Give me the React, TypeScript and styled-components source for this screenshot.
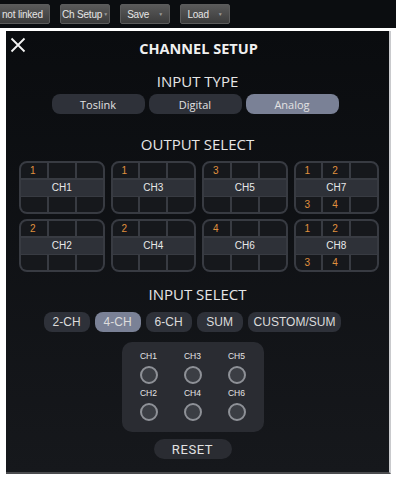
import React from 'react';
import styled, { createGlobalStyle } from 'styled-components';

const GlobalStyle = createGlobalStyle`
  html, body {
    margin: 0;
    padding: 0;
    background: #ffffff;
  }
  * {
    box-sizing: border-box;
  }
`;

const Page = styled.div`
  width: 396px;
  height: 482px;
  display: flex;
  flex-direction: column;
  background: #ffffff;
  overflow: hidden;
`;

const TopBar = styled.div`
  height: 28px;
  display: flex;
  align-items: center;
  gap: 10px;
  background: #0b0d10;
`;

const BarButton = styled.div<{ $first?: boolean }>`
  width: ${(p) => (p.$first ? '52px' : '50px')};
  height: 20px;
  margin-left: ${(p) => (p.$first ? '-2px' : '0')};
  padding-left: ${(p) => (p.$first ? '3px' : '0')};
  display: flex;
  align-items: center;
  justify-content: ${(p) => (p.$first ? 'flex-start' : 'center')};
  white-space: nowrap;
  border-radius: 2px;
  border: 1px solid #5c5c5c;
  background: linear-gradient(#5a5a5a, #3c3c3c);
  color: #e6e6e6;
  font-family: 'Liberation Sans', Arial, sans-serif;
  font-size: 10px;
  letter-spacing: -0.2px;
`;

const Caret = styled.span<{ $gap: number }>`
  color: #9a9a9a;
  font-size: 5px;
  margin-left: ${(p) => p.$gap}px;
`;

const Panel = styled.div`
  margin: 3px 5px 0 6px;
  height: 443px;
  display: flex;
  flex-direction: column;
  align-items: center;
  background: linear-gradient(#0a0c0f, #16181c);
  border-right: 2px solid #c9cacd;
  border-bottom: 2px solid #4b4c4f;
  font-family: 'Open Sans', sans-serif;
  color: #e8e8e8;
`;

const Header = styled.div`
  width: 100%;
  height: 30px;
  display: flex;
  align-items: center;
  justify-content: center;
  position: relative;
`;

const CloseButton = styled.div`
  position: absolute;
  left: 4px;
  top: 6px;
  width: 16px;
  height: 16px;
  display: flex;
`;

const Title = styled.div`
  font-size: 14.5px;
  font-weight: 700;
  margin-top: 4px;
  margin-left: 2px;
  color: #f0f0f0;
`;

const SectionTitle = styled.div<{ $top: number }>`
  margin-top: ${(p) => p.$top}px;
  font-size: 15px;
  line-height: 20px;
  color: #e6e6e6;
`;

const TypeRow = styled.div`
  display: flex;
  gap: 4px;
  margin-top: 3px;
  margin-right: 5px;
`;

const TypeButton = styled.div<{ $active?: boolean }>`
  width: 93px;
  height: 20px;
  display: flex;
  align-items: center;
  justify-content: center;
  border-radius: 8px;
  background: ${(p) => (p.$active ? '#7a8196' : '#2e3139')};
  font-size: 11px;
  color: #e2e2e2;
`;

const OutputGrid = styled.div`
  width: 360px;
  margin-top: 7px;
  margin-left: 3px;
  display: grid;
  grid-template-columns: repeat(4, 1fr);
  column-gap: 6px;
  row-gap: 5px;
`;

const Card = styled.div`
  height: 53px;
  display: grid;
  grid-template-rows: 15px 16px 15px;
  row-gap: 1.5px;
  border: 2px solid #383b42;
  border-radius: 8px;
  overflow: hidden;
  background: #383b42;
  font-family: 'Liberation Sans', Arial, sans-serif;
`;

const CellRow = styled.div`
  display: grid;
  grid-template-columns: repeat(3, 1fr);
  column-gap: 2px;
`;

const Cell = styled.div`
  background: #16181c;
  padding-left: 9px;
  font-size: 10px;
  line-height: 15px;
  color: #e0913e;
`;

const Band = styled.div`
  display: flex;
  align-items: center;
  justify-content: center;
  background: #2e3138;
  font-size: 10px;
  color: #e8e8e8;
`;

const SelectRow = styled.div`
  display: flex;
  gap: 5px;
  margin-top: 8px;
  margin-right: 10px;
`;

const SelectButton = styled.div<{ $active?: boolean }>`
  min-width: 46px;
  height: 20px;
  padding: 0 6px;
  display: flex;
  align-items: center;
  justify-content: center;
  border-radius: 8px;
  background: ${(p) => (p.$active ? '#7a8196' : '#2e3139')};
  font-family: 'Liberation Sans', Arial, sans-serif;
  font-size: 12px;
  color: #dcdcdc;
`;

const InputBox = styled.div`
  width: 142px;
  height: 90px;
  margin-top: 10px;
  margin-right: 10px;
  padding: 9px 5px 0;
  display: grid;
  grid-template-columns: repeat(3, 1fr);
  row-gap: 4px;
  align-content: start;
  border-radius: 10px;
  background: #2a2c32;
`;

const Input = styled.div`
  display: flex;
  flex-direction: column;
  align-items: center;
  gap: 4px;
`;

const InputLabel = styled.div`
  font-family: 'Liberation Sans', Arial, sans-serif;
  font-size: 8.5px;
  line-height: 11px;
  color: #e4e4e4;
`;

const Knob = styled.div`
  width: 18px;
  height: 18px;
  border-radius: 50%;
  border: 2.5px solid #8e9197;
  background: #3b3e44;
`;

const ResetButton = styled.div`
  width: 78px;
  height: 20px;
  margin-top: 7px;
  margin-right: 10px;
  display: flex;
  align-items: center;
  justify-content: center;
  border-radius: 10px;
  background: #2a2c32;
  font-family: 'Roboto', 'Liberation Sans', sans-serif;
  font-size: 13px;
  letter-spacing: 0.6px;
  color: #e2e2e2;
`;

type Slots = [string, string, string];

interface Channel {
  name: string;
  top: Slots;
  bottom: Slots;
}

const channels: Channel[] = [
  { name: 'CH1', top: ['1', '', ''], bottom: ['', '', ''] },
  { name: 'CH3', top: ['1', '', ''], bottom: ['', '', ''] },
  { name: 'CH5', top: ['3', '', ''], bottom: ['', '', ''] },
  { name: 'CH7', top: ['1', '2', ''], bottom: ['3', '4', ''] },
  { name: 'CH2', top: ['2', '', ''], bottom: ['', '', ''] },
  { name: 'CH4', top: ['2', '', ''], bottom: ['', '', ''] },
  { name: 'CH6', top: ['4', '', ''], bottom: ['', '', ''] },
  { name: 'CH8', top: ['1', '2', ''], bottom: ['3', '4', ''] },
];

const inputModes = ['2-CH', '4-CH', '6-CH', 'SUM', 'CUSTOM/SUM'];
const inputs = ['CH1', 'CH3', 'CH5', 'CH2', 'CH4', 'CH6'];

const App = (): React.ReactElement => (
  <>
    <GlobalStyle />
    <Page>
      <TopBar>
        <BarButton $first>not linked</BarButton>
        <BarButton>
          Ch Setup<Caret $gap={1}>▼</Caret>
        </BarButton>
        <BarButton>
          Save<Caret $gap={9}>▼</Caret>
        </BarButton>
        <BarButton>
          Load<Caret $gap={9}>▼</Caret>
        </BarButton>
      </TopBar>
      <Panel>
        <Header>
          <CloseButton>
            <svg width="16" height="16" viewBox="0 0 16 16">
              <path d="M1.5 1.5 L14.5 14.5 M14.5 1.5 L1.5 14.5" stroke="#f2f2f2" strokeWidth="1.8" />
            </svg>
          </CloseButton>
          <Title>CHANNEL SETUP</Title>
        </Header>
        <SectionTitle $top={10}>INPUT TYPE</SectionTitle>
        <TypeRow>
          <TypeButton>Toslink</TypeButton>
          <TypeButton>Digital</TypeButton>
          <TypeButton $active>Analog</TypeButton>
        </TypeRow>
        <SectionTitle $top={20}>OUTPUT SELECT</SectionTitle>
        <OutputGrid>
          {channels.map((ch) => (
            <Card key={ch.name}>
              <CellRow>
                {ch.top.map((n, i) => (
                  <Cell key={i}>{n}</Cell>
                ))}
              </CellRow>
              <Band>{ch.name}</Band>
              <CellRow>
                {ch.bottom.map((n, i) => (
                  <Cell key={i}>{n}</Cell>
                ))}
              </CellRow>
            </Card>
          ))}
        </OutputGrid>
        <SectionTitle $top={12}>INPUT SELECT</SectionTitle>
        <SelectRow>
          {inputModes.map((m) => (
            <SelectButton key={m} $active={m === '4-CH'}>
              {m}
            </SelectButton>
          ))}
        </SelectRow>
        <InputBox>
          {inputs.map((name) => (
            <Input key={name}>
              <InputLabel>{name}</InputLabel>
              <Knob />
            </Input>
          ))}
        </InputBox>
        <ResetButton>RESET</ResetButton>
      </Panel>
    </Page>
  </>
);

export default App;
